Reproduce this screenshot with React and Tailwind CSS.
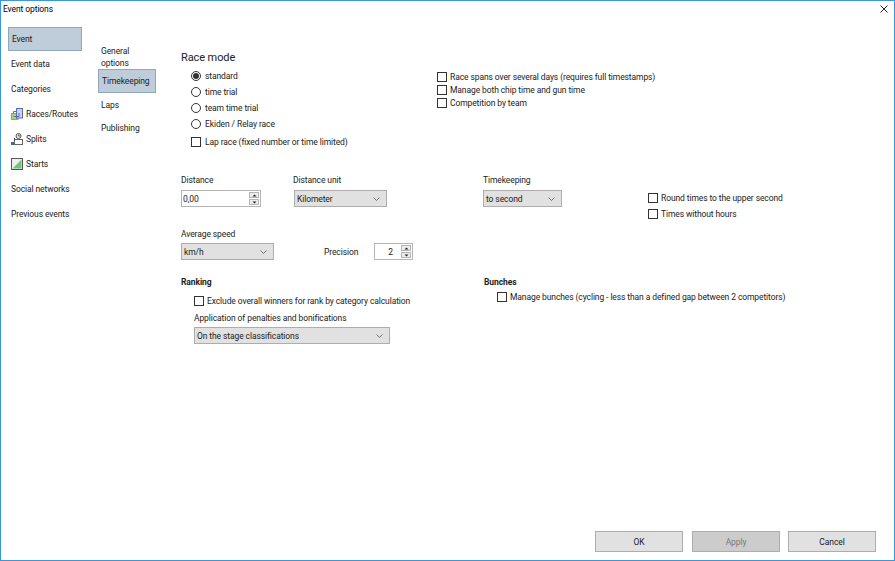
import React from "react";

const Check = ({ label, className = "", wide }) => (
  <div className={`flex items-center h-[13px] ${className}`}>
    <span className="w-[10px] h-[10px] border border-[#333] bg-white shrink-0" />
    <span className={`${wide ? "ml-[4px]" : "ml-[3px]"} whitespace-nowrap`}>{label}</span>
  </div>
);

const Radio = ({ label, on }) => (
  <div className="flex items-center h-[16px]">
    <span className="w-[10px] h-[10px] rounded-full border border-[#333] bg-white shrink-0 flex items-center justify-center">
      {on && <span className="w-[6px] h-[6px] rounded-full bg-[#333]" />}
    </span>
    <span className="ml-[4px] whitespace-nowrap">{label}</span>
  </div>
);

const Chevron = () => (
  <svg width="7" height="4" viewBox="0 0 7 4" className="shrink-0">
    <path d="M0.5 0.5 L3.5 3.5 L6.5 0.5" fill="none" stroke="#666" strokeWidth="0.9" />
  </svg>
);

const Select = ({ label, className = "" }) => (
  <div className={`h-[17px] bg-[#e1e1e1] border border-[#adadad] flex items-center justify-between pl-[2px] pr-[6px] ${className}`}>
    <span className="whitespace-nowrap">{label}</span>
    <Chevron />
  </div>
);

const Spin = ({ value, className = "", right }) => (
  <div className={`h-[17px] bg-white border border-[#b4b4b4] flex items-center justify-between pl-[1px] pr-[1px] ${className}`}>
    <span className={right ? "flex-1 text-right pr-[8px]" : ""}>{value}</span>
    <span className="w-[10px] h-[13px] flex flex-col gap-px shrink-0">
      <span className="h-[6px] bg-[#ececec] border border-[#b4b4b4] flex items-center justify-center">
        <svg width="5" height="3" viewBox="0 0 5 3"><path d="M2.5 0.5 L4.5 2.5 H0.5 Z" fill="#222" /></svg>
      </span>
      <span className="h-[6px] bg-[#ececec] border border-[#b4b4b4] flex items-center justify-center">
        <svg width="5" height="3" viewBox="0 0 5 3"><path d="M0.5 0.5 H4.5 L2.5 2.5 Z" fill="#222" /></svg>
      </span>
    </span>
  </div>
);

const RacesIcon = () => (
  <svg width="12" height="12" viewBox="0 0 12 12" className="shrink-0">
    <rect x="0.5" y="5.5" width="6.5" height="6" fill="#a9d56f" stroke="#86b356" />
    <rect x="5.5" y="0.5" width="6" height="9.5" fill="#c9d2ee" stroke="#5a6bb8" />
    <path d="M2.5 5.5 V3.5 H5.5 M2.5 8.5 H8 V5" fill="none" stroke="#5a6bb8" />
  </svg>
);

const SplitsIcon = () => (
  <svg width="12" height="12" viewBox="0 0 12 12" className="shrink-0">
    <rect x="0" y="9" width="4" height="3" fill="#2f6db8" />
    <rect x="3.5" y="6.5" width="8" height="5" fill="#fff" stroke="#666" />
    <path d="M3.5 8 V5" stroke="#444" />
    <circle cx="7.5" cy="3" r="2.5" fill="#e8e8e8" stroke="#555" />
    <path d="M7.5 1.5 V3 H9" stroke="#333" fill="none" strokeWidth="0.7" />
  </svg>
);

const StartsIcon = () => (
  <svg width="12" height="12" viewBox="0 0 12 12" className="shrink-0">
    <rect x="0.5" y="0.5" width="11" height="11" fill="#efefef" stroke="#555" />
    <path d="M10.5 1.5 V10.5 H1.5 Z" fill="#6fc67a" />
  </svg>
);

const NavRow = ({ icon, children }) => (
  <div className="h-[25px] pl-[3px] flex items-center gap-[3px] whitespace-nowrap">
    {icon}
    <span>{children}</span>
  </div>
);

const Button = ({ children, disabled, className = "" }) => (
  <div className={`w-[88px] h-[21px] flex items-center justify-center border border-[#adadad] ${disabled ? "bg-[#cccccc] text-[#7a7a7a]" : "bg-[#e1e1e1]"} ${className}`}>
    {children}
  </div>
);

export default function App() {
  return (
    <div
      className="w-[895px] h-[561px] bg-white border border-[#3a96dd] flex flex-col text-[8.5px] tracking-[-0.1px] leading-[12px] text-[#222] overflow-hidden"
      style={{ fontFamily: 'Roboto, "Noto Sans", sans-serif' }}
    >
      <div className="h-[15px] shrink-0 flex items-center justify-between pl-[2px] pr-[6px]">
        <span className="text-black">Event options</span>
        <svg width="8" height="8" viewBox="0 0 8 8" className="mt-[1px]">
          <path d="M0.5 0.5 L7.5 7.5 M7.5 0.5 L0.5 7.5" stroke="#222" strokeWidth="1" />
        </svg>
      </div>

      <div className="flex-1 flex min-h-0">
        {/* main navigation */}
        <div className="w-[74px] ml-[7px] mt-[11px] shrink-0">
          <div className="h-[24px] pl-[3px] flex items-center bg-[#bfcddb] border border-[#8fa7bf]">Event</div>
          <NavRow>Event data</NavRow>
          <NavRow>Categories</NavRow>
          <NavRow icon={<RacesIcon />}>Races/Routes</NavRow>
          <NavRow icon={<SplitsIcon />}>Splits</NavRow>
          <NavRow icon={<StartsIcon />}>Starts</NavRow>
          <NavRow>Social networks</NavRow>
          <NavRow>Previous events</NavRow>
        </div>

        {/* sub navigation */}
        <div className="w-[58px] ml-[16px] mt-[28px] shrink-0">
          <div className="h-[25px] pl-[3px] pt-[1px]">General<br />options</div>
          <div className="h-[24px] pl-[3px] flex items-center bg-[#bfcddb] border border-[#8fa7bf]">Timekeeping</div>
          <div className="h-[23px] pl-[3px] flex items-center">Laps</div>
          <div className="h-[24px] pl-[3px] flex items-center">Publishing</div>
        </div>

        {/* content */}
        <div className="flex-1 flex flex-col min-w-0 ml-[25px]">
          <div className="text-[11px] leading-[14px] mt-[35px]">Race mode</div>

          <div className="flex mt-[3px] h-[90px]">
            <div className="w-[256px] pl-[10px] shrink-0">
              <Radio on label="standard" />
              <Radio label="time trial" />
              <Radio label="team time trial" />
              <Radio label="Ekiden / Relay race" />
              <Check wide label="Lap race (fixed number or time limited)" className="mt-[2px] h-[16px]" />
            </div>
            <div className="pt-[2px]">
              <Check label="Race spans over several days (requires full timestamps)" />
              <Check label="Manage both chip time and gun time" />
              <Check label="Competition by team" />
            </div>
          </div>

          <div className="flex mt-[16px] h-[37px]">
            <div className="w-[112px] shrink-0">
              <div className="mb-[4px]">Distance</div>
              <Spin value="0,00" className="w-[80px]" />
            </div>
            <div className="w-[190px] shrink-0">
              <div className="mb-[4px]">Distance unit</div>
              <Select label="Kilometer" className="w-[93px] ml-[1px]" />
            </div>
            <div className="w-[165px] shrink-0">
              <div className="mb-[4px]">Timekeeping</div>
              <Select label="to second" className="w-[79px]" />
            </div>
            <div className="pt-[12px] mt-[5px]">
              <Check label="Round times to the upper second" className="mb-[3px]" />
              <Check label="Times without hours" />
            </div>
          </div>

          <div className="mt-[17px]">Average speed</div>
          <div className="flex items-center mt-[3px]">
            <Select label="km/h" className="w-[93px]" />
            <span className="ml-[50px] w-[50px]">Precision</span>
            <Spin value="2" right className="w-[39px]" />
          </div>

          <div className="flex mt-[16px]">
            <div className="w-[303px] shrink-0">
              <div className="font-bold">Ranking</div>
              <Check label="Exclude overall winners for rank by category calculation" className="ml-[13px] mt-[6px]" />
              <div className="ml-[13px] mt-[5px]">Application of penalties and bonifications</div>
              <Select label="On the stage classifications" className="w-[196px] ml-[13px] mt-[3px]" />
            </div>
            <div>
              <div className="font-bold">Bunches</div>
              <Check label="Manage bunches (cycling - less than a defined gap between 2 competitors)" className="ml-[13px] mt-[2px]" />
            </div>
          </div>

          <div className="mt-auto mb-[8px] flex justify-end gap-[8px] pr-[18px]">
            <Button className="mr-[1px]">OK</Button>
            <Button disabled>Apply</Button>
            <Button>Cancel</Button>
          </div>
        </div>
      </div>
    </div>
  );
}
